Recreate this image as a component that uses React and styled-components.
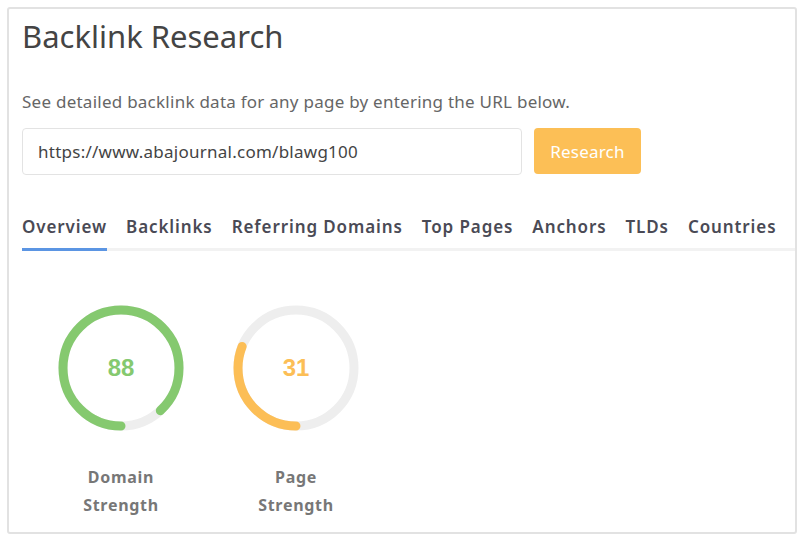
import React from "react";
import styled, { createGlobalStyle } from "styled-components";

const GlobalStyle = createGlobalStyle`
  html, body {
    margin: 0;
    padding: 0;
    background: #fff;
  }
  body {
    font-family: "Noto Sans", "Open Sans", sans-serif;
  }
`;

const tabs = ["Overview", "Backlinks", "Referring Domains", "Top Pages", "Anchors", "TLDs", "Countries"];

const gauges = [
  { value: 88, color: "#85c96f", label: "Domain Strength" },
  { value: 31, color: "#fcbe56", label: "Page Strength" },
];

const Gauge = ({ value, color, label }) => {
  const r = 58;
  const c = 2 * Math.PI * r;
  const len = (value / 100) * c;
  return (
    <GaugeItem>
      <Ring>
        <svg width="126" height="126" viewBox="0 0 126 126">
          <circle cx="63" cy="63" r={r} fill="none" stroke="#eeeeee" strokeWidth="9" />
          <circle
            cx="63"
            cy="63"
            r={r}
            fill="none"
            stroke={color}
            strokeWidth="9"
            strokeLinecap="round"
            strokeDasharray={`${len} ${c}`}
            transform="rotate(90 63 63)"
          />
        </svg>
        <Score color={color}>{value}</Score>
      </Ring>
      <GaugeLabel>{label}</GaugeLabel>
    </GaugeItem>
  );
};

const App = () => {
  return (
    <>
      <GlobalStyle />
      <Page>
        <Card>
          <Title>Backlink Research</Title>
          <Intro>See detailed backlink data for any page by entering the URL below.</Intro>
          <SearchRow>
            <UrlInput defaultValue="https://www.abajournal.com/blawg100" />
            <ResearchButton>Research</ResearchButton>
          </SearchRow>
          <TabBar>
            {tabs.map((t, i) => (
              <Tab key={t} active={i === 0}>
                {t}
              </Tab>
            ))}
          </TabBar>
          <Gauges>
            {gauges.map((g) => (
              <Gauge key={g.label} {...g} />
            ))}
          </Gauges>
        </Card>
      </Page>
    </>
  );
};

export default App;

const Page = styled.div`
  padding: 7px;
  width: 804px;
  height: 542px;
  box-sizing: border-box;
`;

const Card = styled.div`
  box-sizing: border-box;
  width: 790px;
  height: 527px;
  border: 2px solid #e2e2e2;
  border-radius: 3px;
  padding: 9px 0 0 13px;
  overflow: hidden;
`;

const Title = styled.h1`
  margin: 0;
  font-size: 31px;
  font-weight: 400;
  line-height: 36px;
  color: #444;
`;

const Intro = styled.p`
  margin: 36px 0 0;
  font-size: 17px;
  line-height: 24px;
  letter-spacing: 0.25px;
  color: #666;
`;

const SearchRow = styled.div`
  display: flex;
  gap: 12px;
  margin-top: 14px;
`;

const UrlInput = styled.input`
  box-sizing: border-box;
  width: 500px;
  height: 47px;
  border: 1px solid #e3e3e3;
  border-radius: 4px;
  padding: 0 15px;
  font-family: "Noto Sans", sans-serif;
  font-size: 17px;
  letter-spacing: 0.25px;
  color: #444;
  outline: none;
`;

const ResearchButton = styled.button`
  box-sizing: border-box;
  width: 107px;
  height: 46px;
  border: none;
  border-radius: 4px;
  background: #fcbf56;
  color: #fff;
  font-family: "Noto Sans", sans-serif;
  font-size: 17px;
  letter-spacing: 0.2px;
  cursor: pointer;
`;

const TabBar = styled.div`
  display: flex;
  gap: 19px;
  margin-top: 40px;
  border-bottom: 3px solid #f2f2f2;
`;

const Tab = styled.div`
  padding-bottom: 9px;
  margin-bottom: -3px;
  font-size: 17px;
  font-weight: 600;
  line-height: 24px;
  letter-spacing: 0.9px;
  color: #4a4a55;
  border-bottom: 3px solid ${(p) => (p.active ? "#5b95e3" : "transparent")};
`;

const Gauges = styled.div`
  display: flex;
  gap: 49px;
  margin: 54px 0 0 36px;
`;

const GaugeItem = styled.div`
  width: 126px;
  display: flex;
  flex-direction: column;
  align-items: center;
`;

const Ring = styled.div`
  position: relative;
  width: 126px;
  height: 126px;
`;

const Score = styled.div`
  position: absolute;
  inset: 0;
  display: flex;
  align-items: center;
  justify-content: center;
  font-family: "Liberation Sans", Arial, sans-serif;
  font-weight: 700;
  font-size: 24px;
  color: ${(p) => p.color};
`;

const GaugeLabel = styled.div`
  margin-top: 32px;
  width: 110px;
  text-align: center;
  font-size: 16px;
  font-weight: 700;
  line-height: 28px;
  letter-spacing: 0.7px;
  color: #777;
`;
